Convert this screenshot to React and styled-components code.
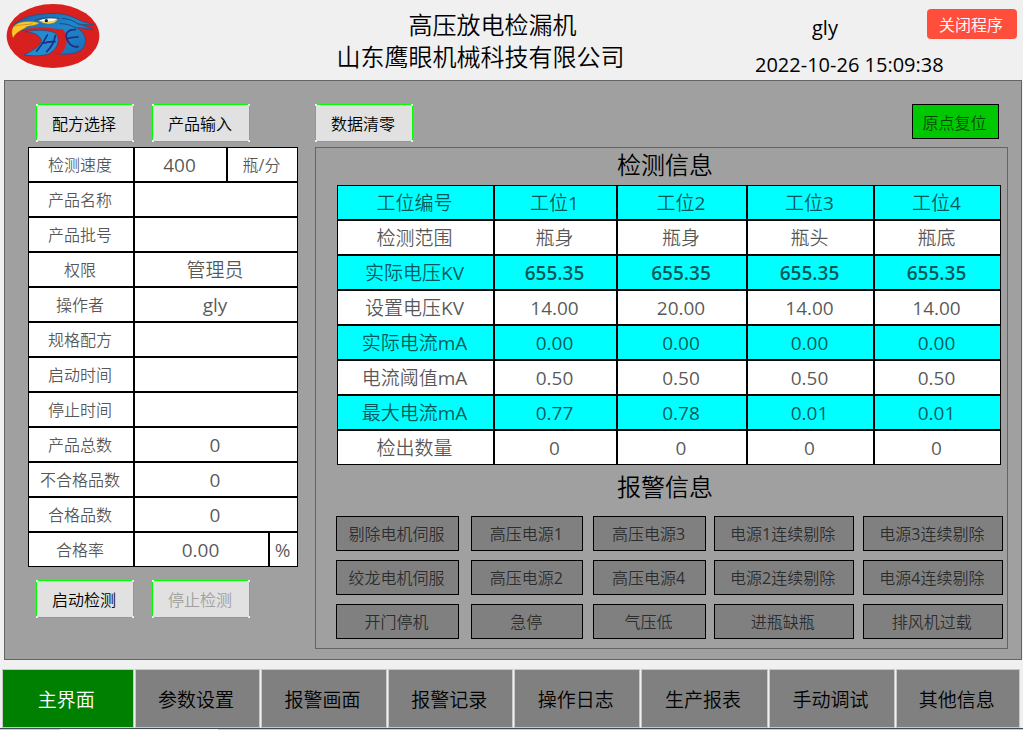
import styled, { createGlobalStyle } from "styled-components";

const GlobalStyle = createGlobalStyle`
  * {
    box-sizing: border-box;
  }

  body {
    margin: 0;
    background-color: #f0f0f0;
    color: #000;
    font-family: "Open Sans", "Noto Sans CJK SC DemiLight", "Noto Sans CJK SC", sans-serif;
    font-size: 16px;
    font-weight: 400;
  }

  button {
    font: inherit;
    padding: 0;
    white-space: nowrap;
  }
`;

const Header = styled.header`
  display: grid;
  grid-template-columns: 206px 1fr 268px;
  height: 80px;
`;

const Logo = styled.svg`
  width: 94px;
  height: 66px;
  margin: 3px 0 0 6px;
`;

const Title = styled.h1`
  margin: 0;
  padding-top: 9px;
  font-size: 24px;
  font-weight: 400;
  line-height: 32px;
  text-align: center;
  text-indent: 24px;
`;

const Status = styled.div`
  padding: 9px 6px 0 0;
  font-size: 20px;
`;

const UserRow = styled.div`
  display: flex;
  justify-content: space-between;
  align-items: center;
  height: 36px;
  padding-left: 57px;
`;

const CloseBtn = styled.button`
  align-self: flex-start;
  width: 90px;
  height: 30px;
  padding-right: 2px;
  border: none;
  border-radius: 4px;
  background-color: #ff4f3c;
  color: #fff;
  font-size: 16px;
`;

const Clock = styled.time`
  display: block;
  line-height: 40px;
`;

const Panel = styled.main`
  display: flex;
  gap: 17px;
  margin: 0 1px 9px 4px;
  padding: 23px 13px 10px 23px;
  border: 1px solid #646464;
  background-color: #a0a0a0;
`;

const Side = styled.section`
  flex: 0 0 270px;
`;

const Content = styled.section`
  flex: 1;
  min-width: 0;
`;

const BtnRow = styled.div`
  display: flex;
  gap: 18px;
  padding: ${(props) => props.$padding};
`;

const ActionBtn = styled.button`
  width: 98px;
  height: 38px;
  padding-right: 2px;
  border: none;
  background:
    linear-gradient(#e1e1e1, #e1e1e1) center / calc(100% - 2px)
      calc(100% - 2px) no-repeat,
    linear-gradient(#0f0, #0f0) center / calc(100% - 4px) 100% no-repeat,
    linear-gradient(#0f0, #0f0) center / 100% calc(100% - 4px) no-repeat,
    #f0f0f0;
  color: #000;

  &:disabled {
    color: #a0a0a0;
  }
`;

const ResetBtn = styled.button`
  width: 87px;
  height: 35px;
  margin: 0 9px 0 auto;
  padding-right: 2px;
  border: 1px solid #000;
  background-color: #00c800;
  color: rgba(0, 0, 0, 0.67);
`;

const Table = styled.table`
  width: 100%;
  table-layout: fixed;
  border-spacing: 0;

  th,
  td {
    height: 35px;
    padding: 0 2px 0 0;
    border: 1px solid #000;
    background-color: #fff;
    color: rgba(0, 0, 0, 0.67);
    font-size: 19px;
    font-weight: 400;
    line-height: 24px;
    text-align: center;
    white-space: nowrap;
  }
`;

const InfoTable = styled(Table)`
  th {
    font-size: 16px;
  }
`;

const UnitCell = styled.td`
  && {
    font-size: ${(props) => props.$size};
  }
`;

const StationTable = styled(Table)`
  thead th,
  tbody tr:nth-child(even) > * {
    background-color: #0ff;
  }

  tbody tr:nth-child(2) > td {
    font-weight: 600;
  }
`;

const Frame = styled.div`
  height: 502px;
  padding: 0 6px 0 21px;
  border: 1px solid #646464;
`;

const FrameTitle = styled.h2`
  margin: 0;
  padding: 0 8px 4px 0;
  font-size: 24px;
  font-weight: 400;
  line-height: ${(props) => props.$height};
  text-align: center;
`;

const Alarms = styled.div`
  display: grid;
  grid-template-columns: 123fr 12px 112fr 10px 112fr 8px 140fr 9px 140fr;
  row-gap: 9px;
  padding-top: 3px;
  margin: 0 -2px 0 -1px;
`;

const AlarmBtn = styled.button`
  grid-column: ${(props) => props.$col * 2 + 1};
  height: 35px;
  padding: 0 2px 2px 0;
  border: 1px solid #000;
  background-color: #808080;
  color: rgba(0, 0, 0, 0.67);
`;

const Nav = styled.nav`
  display: grid;
  grid-template-columns: 132fr 126fr 126fr 126fr 126fr 127fr 127fr 124fr;
  gap: 1px;
  padding: 0 3px 0 2px;
`;

const NavBtn = styled.button`
  height: 59px;
  padding-right: 3px;
  border: 1px solid #c8c8c8;
  background-color: ${(props) => (props.$active ? "#008000" : "#808080")};
  color: ${(props) => (props.$active ? "#fff" : "#000")};
  font-size: 19px;
`;

const BottomEdge = styled.div`
  height: 2px;
  border-top: 1px solid #404850;
  background: linear-gradient(#f4f6f8, #f4f6f8) 60px 0 / 158px 1px no-repeat
    #c0d0e0;
`;

const info = [
  ["检测速度", "400", "瓶/分"],
  ["产品名称", ""],
  ["产品批号", ""],
  ["权限", "管理员"],
  ["操作者", "gly"],
  ["规格配方", ""],
  ["启动时间", ""],
  ["停止时间", ""],
  ["产品总数", "0"],
  ["不合格品数", "0"],
  ["合格品数", "0"],
];

const stations = [
  ["检测范围", "瓶身", "瓶身", "瓶头", "瓶底"],
  ["实际电压KV", "655.35", "655.35", "655.35", "655.35"],
  ["设置电压KV", "14.00", "20.00", "14.00", "14.00"],
  ["实际电流mA", "0.00", "0.00", "0.00", "0.00"],
  ["电流阈值mA", "0.50", "0.50", "0.50", "0.50"],
  ["最大电流mA", "0.77", "0.78", "0.01", "0.01"],
  ["检出数量", "0", "0", "0", "0"],
];

const alarms = [
  ["剔除电机伺服", "高压电源1", "高压电源3", "电源1连续剔除", "电源3连续剔除"],
  ["绞龙电机伺服", "高压电源2", "高压电源4", "电源2连续剔除", "电源4连续剔除"],
  ["开门停机", "急停", "气压低", "进瓶缺瓶", "排风机过载"],
];

const pages = [
  "主界面",
  "参数设置",
  "报警画面",
  "报警记录",
  "操作日志",
  "生产报表",
  "手动调试",
  "其他信息",
];

function EagleLogo() {
  return (
    <Logo viewBox="0 0 282 198" aria-hidden="true">
      <defs>
        <linearGradient id="feather" x1="0" x2="1" y1="0" y2="1">
          <stop offset="0" stopColor="#1c5fa8" />
          <stop offset="0.5" stopColor="#2187c9" />
          <stop offset="1" stopColor="#1769b4" />
        </linearGradient>
      </defs>
      <ellipse cx="141" cy="99" rx="139" ry="96" fill="#d8201e" />
      <g stroke="#174b86" strokeWidth="2" strokeLinejoin="round">
        {/* head and the right wing */}
        <path
          d="M22 66C48 46 74 35 108 34C150 28 182 32 208 46C228 57 248 60 262 65C245 66 230 64 214 62C232 69 252 72 261 80C246 76 228 75 212 74C234 88 243 106 237 124C230 147 200 158 152 152C164 146 171 138 174 128C182 108 176 88 160 80C128 76 92 76 48 82Z"
          fill="url(#feather)"
        />
        <path
          d="M164 80C184 98 182 130 158 151"
          fill="none"
          stroke="#d8201e"
          strokeWidth="10"
        />
        {/* left wing */}
        <path
          d="M58 86C88 80 132 80 148 91C166 108 154 140 128 153C104 160 78 159 54 156C84 142 106 126 106 112C104 98 84 88 58 86Z"
          fill="#248bd0"
        />
        <path
          d="M64 80C94 76 132 74 158 84"
          fill="none"
          stroke="#d8201e"
          strokeWidth="6"
        />
      </g>
      <path
        d="M21 105C13 82 18 66 45 58C62 54 82 56 100 59C92 68 72 67 62 71C54 80 32 82 21 105Z"
        fill="#ffc62a"
        stroke="#8d6827"
      />
      <path
        d="M22 70C43 64 63 66 80 62"
        fill="none"
        stroke="#b77b18"
        strokeWidth="2"
      />
      <path
        d="M98 53C114 45 134 45 156 46C148 58 121 60 98 53Z"
        fill="#fff8dc"
      />
      <path
        d="M98 54C124 60 139 57 157 49L145 59C127 65 112 61 98 54Z"
        fill="#f5ce3b"
      />
      <circle cx="121" cy="53" r="5" fill="#182330" />
      <path
        d="M88 52C116 42 141 43 160 47M168 46C190 47 206 56 217 63M160 62C184 62 197 68 211 75"
        fill="none"
        stroke="#174b86"
        strokeWidth="3"
      />
      <path
        d="M124 96C116 113 106 128 92 144M148 98C145 116 138 131 122 146M108 121C122 117 134 115 147 116M208 80C188 78 177 90 182 106C187 122 197 134 216 131M184 107C195 102 205 102 216 102"
        fill="none"
        stroke="#202b83"
        strokeWidth="5"
        strokeLinecap="round"
      />
    </Logo>
  );
}

function App() {
  return (
    <>
      <GlobalStyle />
      <Header>
        <EagleLogo />
        <Title>
          高压放电检漏机
          <br />
          山东鹰眼机械科技有限公司
        </Title>
        <Status>
          <UserRow>
            <span>gly</span>
            <CloseBtn>关闭程序</CloseBtn>
          </UserRow>
          <Clock dateTime="2022-10-26T15:09:38">2022-10-26 15:09:38</Clock>
        </Status>
      </Header>

      <Panel>
        <Side>
          <BtnRow $padding="0 8px 5px">
            <ActionBtn>配方选择</ActionBtn>
            <ActionBtn>产品输入</ActionBtn>
          </BtnRow>
          <InfoTable>
            <colgroup>
              <col width="106" />
              <col width="93" />
              <col width="42" />
              <col width="29" />
            </colgroup>
            <tbody>
              {info.map(([label, value, unit]) => (
                <tr key={label}>
                  <th scope="row">{label}</th>
                  <td colSpan={unit ? 1 : 3}>{value}</td>
                  {unit && (
                    <UnitCell colSpan={2} $size="16px">
                      {unit}
                    </UnitCell>
                  )}
                </tr>
              ))}
              <tr>
                <th scope="row">合格率</th>
                <td colSpan={2}>0.00</td>
                <UnitCell $size="19px">%</UnitCell>
              </tr>
            </tbody>
          </InfoTable>
          <BtnRow $padding="13px 8px 0">
            <ActionBtn>启动检测</ActionBtn>
            <ActionBtn disabled>停止检测</ActionBtn>
          </BtnRow>
        </Side>

        <Content>
          <BtnRow $padding="0 0 5px">
            <ActionBtn>数据清零</ActionBtn>
            <ResetBtn>原点复位</ResetBtn>
          </BtnRow>
          <Frame>
            <FrameTitle $height="33px">检测信息</FrameTitle>
            <StationTable>
              <colgroup>
                <col width="157" />
                <col width="123" />
                <col width="130" />
                <col width="127" />
                <col width="127" />
              </colgroup>
              <thead>
                <tr>
                  <th scope="col">工位编号</th>
                  <th scope="col">工位1</th>
                  <th scope="col">工位2</th>
                  <th scope="col">工位3</th>
                  <th scope="col">工位4</th>
                </tr>
              </thead>
              <tbody>
                {stations.map(([label, ...values]) => (
                  <tr key={label}>
                    <th scope="row">{label}</th>
                    {values.map((value, i) => (
                      <td key={i}>{value}</td>
                    ))}
                  </tr>
                ))}
              </tbody>
            </StationTable>
            <FrameTitle $height="44px">报警信息</FrameTitle>
            <Alarms>
              {alarms.map((row) =>
                row.map((name, col) => (
                  <AlarmBtn key={name} $col={col}>
                    {name}
                  </AlarmBtn>
                )),
              )}
            </Alarms>
          </Frame>
        </Content>
      </Panel>

      <Nav>
        {pages.map((page, i) => (
          <NavBtn key={page} $active={i === 0}>
            {page}
          </NavBtn>
        ))}
      </Nav>
      <BottomEdge />
    </>
  );
}

export default App;
